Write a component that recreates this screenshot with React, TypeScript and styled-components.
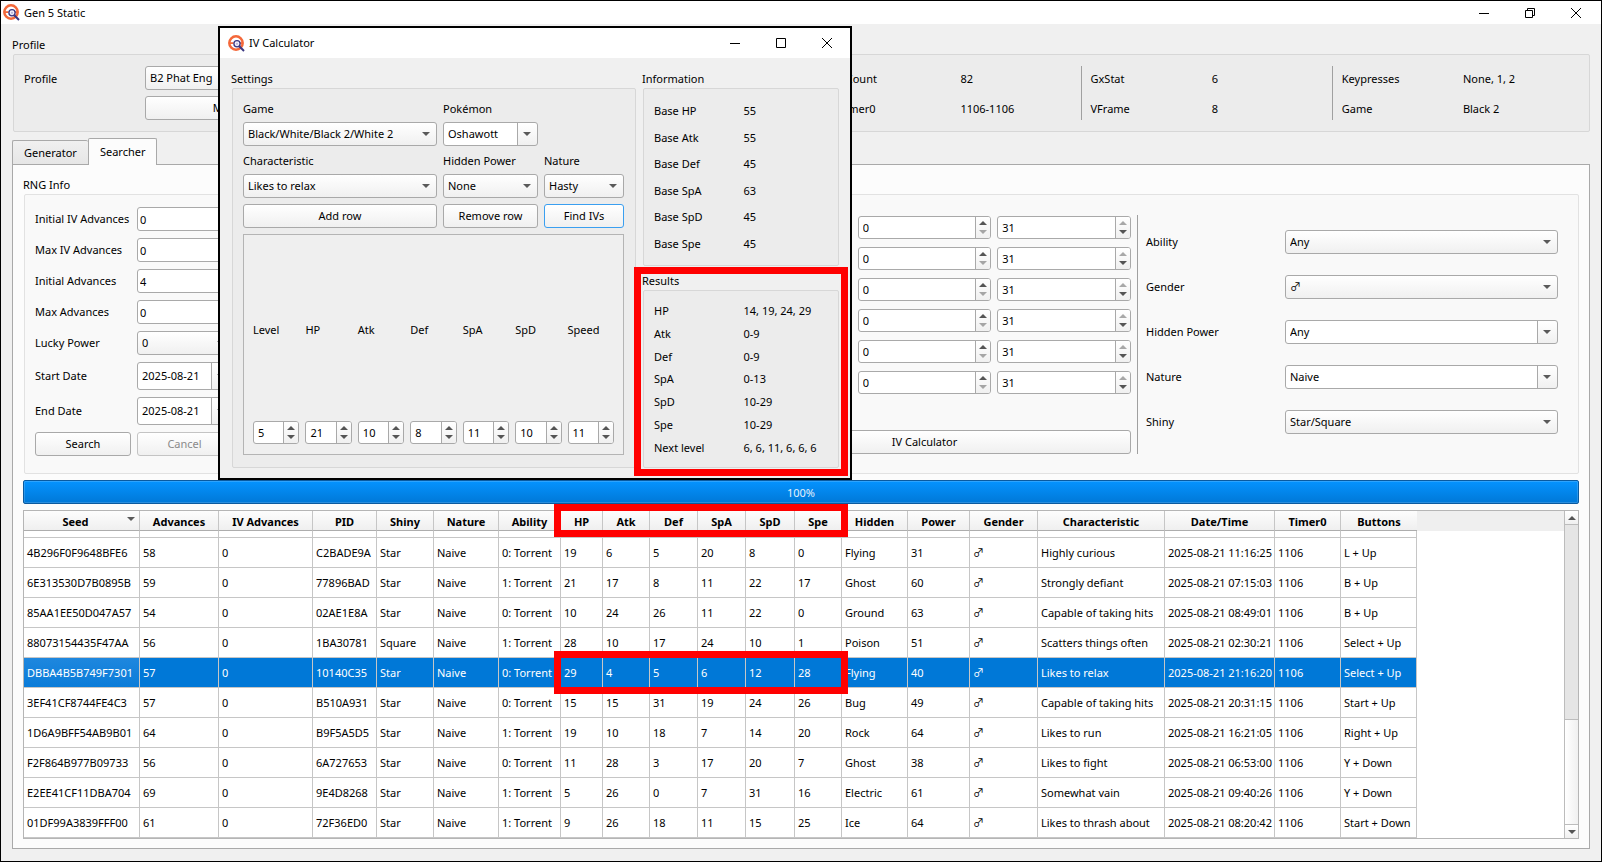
import React, { useId } from 'react';
import styled, { createGlobalStyle, css } from 'styled-components';

const Global = createGlobalStyle`
  *, *::before, *::after { box-sizing: border-box; }
  html, body { margin: 0; }
  body, input, select, button, table {
    font-family: "Noto Sans", "Noto Sans CJK SC", sans-serif;
    font-size: 11px;
    line-height: 16px;
    color: #000;
  }
`;

const face = 'linear-gradient(#ffffff, #f0f0f0)';
const line = '#a9a9a9';

/* ---------- window chrome ---------- */

const Desktop = styled.div`
  position: relative;
  display: flex;
  flex-direction: column;
  min-height: 100vh;
  border: 1px solid #000;
  background: #f0f0f0;
`;

const TitleBar = styled.header<{ $tall?: boolean }>`
  display: flex;
  align-items: center;
  height: ${p => (p.$tall ? 30 : 23)}px;
  padding-left: ${p => (p.$tall ? 8 : 2)}px;
  padding-right: ${p => (p.$tall ? 3 : 5)}px;
  background: #fff;
`;

const WindowTitle = styled.h1`
  flex: 1;
  margin: 0;
  padding-left: 4px;
  font-size: 11px;
  font-weight: 400;
  line-height: 16px;
`;

const ChromeButton = styled.button`
  display: flex;
  align-items: center;
  justify-content: center;
  width: 40px;
  height: 20px;
  padding: 0;
  border: 0;
  background: none;

  & + & { margin-left: 6px; }
`;

const AppIcon = () => (
  <svg width="17" height="17" viewBox="0 0 17 17" aria-hidden="true">
    <circle cx="8" cy="8" r="6.7" fill="#fff" stroke="#f4683a" strokeWidth="2.5" />
    <path d="M2 7.2h3.5v1.8H2zM12 7.2h2.5v1.8H12z" fill="#f4683a" />
    <circle cx="9" cy="8.8" r="3.1" fill="#f1effa" stroke="#3a3680" strokeWidth="1.3" />
    <circle cx="9" cy="8.8" r="1.1" fill="#b9b6dc" />
    <path d="M11.3 11.3 16 16" stroke="#3a3680" strokeWidth="2" />
  </svg>
);

const ChromeButtons = ({ restored }: { restored?: boolean }) => (
  <>
    <ChromeButton aria-label="Minimize">
      <svg width="10" height="10" stroke="#000" fill="none"><path d="M0 5.5h10" /></svg>
    </ChromeButton>
    <ChromeButton aria-label={restored ? 'Maximize' : 'Restore'}>
      <svg width="10" height="10" stroke="#000" fill="none">
        {restored ? <path d="M.5.5h9v9h-9z" /> : <path d="M.5 2.5h7v7h-7zM2.5 2.5v-2h7v7h-2" />}
      </svg>
    </ChromeButton>
    <ChromeButton aria-label="Close">
      <svg width="10" height="10" stroke="#000" fill="none"><path d="M0 0l10 10M10 0L0 10" /></svg>
    </ChromeButton>
  </>
);

/* ---------- group box ---------- */

const Group = styled.section<{ $grow?: boolean }>`
  display: flex;
  flex-direction: column;
  min-width: 0;
  ${p => p.$grow && css`flex: 1;`}
`;

const GroupTitle = styled.h2`
  margin: 0 0 1px;
  font-size: 11px;
  font-weight: 400;
  line-height: 16px;
`;

const GroupBody = styled.div<{ $light?: boolean; $deep?: boolean }>`
  flex: 1;
  margin-left: 1px;
  padding: ${p => (p.$deep ? '12px 20px 17px 10px' : '11px 11px 11px 10px')};
  border: 1px solid ${p => (p.$light ? '#e2e2e2' : '#d7d7d7')};
  border-radius: 2px;
  background: ${p => (p.$light ? '#f9f9f9' : '#ececec')};
`;

/* ---------- controls ---------- */

const Button = styled.button<{ $focused?: boolean; $push?: boolean }>`
  height: 24px;
  padding: 0 6px;
  border: 1px solid ${p => (p.$focused ? '#3a9ff0' : line)};
  border-radius: 3px;
  background: ${face};
  white-space: nowrap;
  ${p => p.$push && css`margin-top: auto;`}

  &:disabled { color: #8a8a8a; border-color: #c4c4c4; }
`;

const SelectShell = styled.div<{ $editable?: boolean; $tall?: boolean }>`
  position: relative;
  height: ${p => (p.$tall ? 28 : 24)}px;
  border: 1px solid ${line};
  border-radius: 3px;
  background: ${p => (p.$editable ? `linear-gradient(${line}, ${line}) right 19px top / 1px 100% no-repeat, ${face} right / 19px 100% no-repeat, #fff` : face)};

  &::after {
    content: '';
    position: absolute;
    right: 6px;
    top: calc(50% - 2px);
    border: 4px solid transparent;
    border-top-color: #5a5a5a;
    border-bottom: 0;
    pointer-events: none;
  }
`;

const SelectField = styled.select`
  display: block;
  width: 100%;
  height: 100%;
  padding: 0 20px 0 4px;
  border: 0;
  background: none;
  appearance: none;
  outline: 0;
`;

const Select = ({ value, id, label, editable, tall }: {
  value: string; id?: string; label?: string; editable?: boolean; tall?: boolean;
}) => (
  <SelectShell $editable={editable} $tall={tall}>
    <SelectField id={id} aria-label={label} defaultValue={value}>
      <option>{value}</option>
    </SelectField>
  </SelectShell>
);

const TextField = styled.input`
  width: 100%;
  min-width: 0;
  height: 24px;
  padding: 0 2px;
  border: 1px solid ${line};
  border-radius: 3px;
  background: #fff;
  outline: 0;
`;

const SpinShell = styled.div`
  display: flex;
  height: 23px;
  min-width: 0;
  border: 1px solid ${line};
  border-radius: 3px;
  background: #fff;
  overflow: hidden;
`;

const SpinInput = styled.input`
  flex: 1;
  width: 0;
  min-width: 0;
  padding: 0 4px;
  border: 0;
  background: none;
  outline: 0;
  appearance: textfield;

  &::-webkit-inner-spin-button { appearance: none; }
`;

const SpinButtons = styled.div`
  display: flex;
  flex-direction: column;
  width: 15px;
  padding: 2px 0;
  border-left: 1px solid ${line};
  background: ${face};
`;

const SpinButton = styled.button<{ $down?: boolean }>`
  display: flex;
  flex: 1;
  align-items: center;
  justify-content: center;
  padding: 0;
  border: 0;
  background: none;

  &::before {
    content: '';
    border: 4px solid transparent;
    ${p => (p.$down ? css`border-top-color: #555; border-bottom: 0;` : css`border-bottom-color: #555; border-top: 0;`)}
  }

  &:disabled { opacity: 0.5; }
`;

const Spin = ({ value, label, atMin, atMax }: {
  value: number; label: string; atMin?: boolean; atMax?: boolean;
}) => (
  <SpinShell>
    <SpinInput type="number" aria-label={label} defaultValue={value} />
    <SpinButtons>
      <SpinButton aria-label={`${label} up`} disabled={atMax} />
      <SpinButton $down aria-label={`${label} down`} disabled={atMin} />
    </SpinButtons>
  </SpinShell>
);

/* ---------- main window ---------- */

const Main = styled.main`
  display: flex;
  flex: 1;
  flex-direction: column;
  padding: 13px 11px 12px;
`;

const ProfileRow = styled.div`
  display: grid;
  grid-template-columns: minmax(0, 13fr) repeat(3, minmax(0, 4fr));
  column-gap: 5px;
`;

const ProfilePicker = styled.div`
  display: grid;
  grid-template-columns: 115px 182px;
  grid-auto-rows: 24px;
  gap: 6px;
  align-items: center;

  ${Button} { grid-column: 2; }
  label { padding-top: 2px; }
`;

const ProfileFacts = styled.dl`
  display: grid;
  grid-template-columns: 1fr 1fr;
  grid-auto-rows: 24px;
  gap: 6px;
  align-items: center;
  margin: 0;
  padding-left: 9px;
  border-left: 1px solid #a0a0a0;

  dt, dd { margin: 0; padding-top: 2px; }
`;

const Tabs = styled.div`
  display: flex;
  align-items: flex-end;
  margin-top: 6px;
`;

const Tab = styled.button<{ $active?: boolean }>`
  position: relative;
  height: ${p => (p.$active ? 27 : 24)}px;
  margin-bottom: ${p => (p.$active ? -1 : 0)}px;
  padding: 0 11px;
  border: 1px solid ${line};
  border-bottom: 0;
  border-radius: 2px 2px 0 0;
  background: ${p => (p.$active ? '#fcfcfc' : 'linear-gradient(#f0f0f0, #e6e6e6)')};
  ${p => !p.$active && css`border-right: 0;`}
`;

const Pane = styled.div`
  display: flex;
  flex: 1;
  flex-direction: column;
  gap: 6px;
  padding: 12px 10px 9px;
  border: 1px solid ${line};
  background: #fcfcfc;
`;

const SearchRow = styled.div`
  display: grid;
  grid-template-columns: minmax(0, 677fr) minmax(0, 413fr) minmax(0, 421fr);
  column-gap: 6px;
`;

const RngForm = styled.form`
  display: grid;
  grid-template-columns: 96px 95px;
  gap: 7px 6px;
  align-items: center;
  white-space: nowrap;
`;

const IvColumn = styled.div`
  display: flex;
  flex-direction: column;
  margin: 8px 0 2px;
  padding-top: 1px;
`;

const IvRanges = styled.div`
  display: grid;
  grid-template-columns: 1fr 1fr 1fr;
  gap: 8px 6px;
`;

const IvPair = styled.div`
  display: grid;
  grid-column: 2 / span 2;
  grid-template-columns: 1fr 1fr;
  gap: 6px;
`;

const FilterColumn = styled.div`
  display: flex;
  flex-direction: column;
  gap: 21px;
  margin: 8px 0 2px;
  padding: 15px 0 0 8px;
  border-left: 1px solid #a0a0a0;
`;

const FilterRow = styled.div`
  display: grid;
  grid-template-columns: minmax(0, 133fr) minmax(0, 273fr);
  gap: 6px;
  align-items: center;
`;

const ProgressBar = styled.div`
  display: flex;
  align-items: center;
  justify-content: center;
  height: 24px;
  padding-top: 2px;
  border: 1px solid #0a5a9f;
  border-radius: 2px;
  background: linear-gradient(#0593ff, #0078d7);
  box-shadow: inset 0 0 0 1px rgba(255, 255, 255, 0.16);
  color: #e6f1fb;
`;

/* ---------- results table ---------- */

const TableView = styled.div`
  display: flex;
  flex: 1;
  border: 1px solid #b5b5b5;
  background: #fff;
`;

const TableScroll = styled.div`
  flex: 1;
  min-width: 0;
  overflow: hidden;
  background: linear-gradient(#efefef, #efefef) top / 100% 20px no-repeat;
`;

const Table = styled.table`
  width: 1393px;
  table-layout: fixed;
  border-collapse: separate;
  border-spacing: 0;
  white-space: nowrap;
`;

const HeadCell = styled.th<{ $sorted?: boolean }>`
  position: relative;
  height: 20px;
  padding: 2px 0 0;
  border-right: 1px solid #c6c6c6;
  border-bottom: 1px solid #adadad;
  background: linear-gradient(#fdfdfd, #efefef);
  font-weight: 700;
  text-align: center;

  &:last-child { border-right: 0; }

  ${p => p.$sorted && css`
    padding-right: 12px;

    &::after {
      content: '';
      position: absolute;
      top: 6px;
      right: 4px;
      border: 4px solid transparent;
      border-top-color: #5a5a5a;
      border-bottom: 0;
    }
  `}
`;

const Row = styled.tr<{ $selected?: boolean }>`
  ${p => p.$selected && css`
    background: #0078d7;
    color: #fff;

    td:first-child { background: linear-gradient(#1e87de, #0a7cd9); }
  `}
`;

const Cell = styled.td<{ $clipped?: boolean }>`
  height: ${p => (p.$clipped ? 7 : 30)}px;
  padding: 0 0 0 3px;
  border-right: 1px solid #c6c6c6;
  border-bottom: 1px solid #c6c6c6;
`;

const ScrollBar = styled.div`
  display: flex;
  flex-direction: column;
  width: 14px;
  border-left: 1px solid #bcbcbc;
  background: #e5e5e5;
`;

const ScrollButton = styled.button<{ $down?: boolean }>`
  display: flex;
  align-items: center;
  justify-content: center;
  height: 14px;
  padding: 0;
  border: 0 solid #bcbcbc;
  border-width: ${p => (p.$down ? '1px 0 0' : '0 0 1px')};
  background: ${face};

  &::before {
    content: '';
    border: 4px solid transparent;
    ${p => (p.$down ? css`border-top-color: #555; border-bottom: 0;` : css`border-bottom-color: #555; border-top: 0;`)}
  }
`;

const ScrollThumb = styled.div`
  flex: 0 0 32%;
  margin-top: auto;
  border-top: 1px solid #bcbcbc;
  background: linear-gradient(90deg, #ffffff, #f0f0f0);
`;

const columns: [string, number][] = [
  ['Seed', 116], ['Advances', 79], ['IV Advances', 94], ['PID', 64], ['Shiny', 57],
  ['Nature', 65], ['Ability', 62], ['HP', 42], ['Atk', 47], ['Def', 48], ['SpA', 48],
  ['SpD', 49], ['Spe', 47], ['Hidden', 66], ['Power', 62], ['Gender', 68],
  ['Characteristic', 127], ['Date/Time', 110], ['Timer0', 66], ['Buttons', 76],
];

const rows = [
  '4B296F0F9648BFE6|58|0|C2BADE9A|Star|Naive|0: Torrent|19|6|5|20|8|0|Flying|31|♂|Highly curious|2025-08-21 11:16:25|1106|L + Up',
  '6E313530D7B0895B|59|0|77896BAD|Star|Naive|1: Torrent|21|17|8|11|22|17|Ghost|60|♂|Strongly defiant|2025-08-21 07:15:03|1106|B + Up',
  '85AA1EE50D047A57|54|0|02AE1E8A|Star|Naive|0: Torrent|10|24|26|11|22|0|Ground|63|♂|Capable of taking hits|2025-08-21 08:49:01|1106|B + Up',
  '88073154435F47AA|56|0|1BA30781|Square|Naive|1: Torrent|28|10|17|24|10|1|Poison|51|♂|Scatters things often|2025-08-21 02:30:21|1106|Select + Up',
  'DBBA4B5B749F7301|57|0|10140C35|Star|Naive|0: Torrent|29|4|5|6|12|28|Flying|40|♂|Likes to relax|2025-08-21 21:16:20|1106|Select + Up',
  '3EF41CF8744FE4C3|57|0|B510A931|Star|Naive|0: Torrent|15|15|31|19|24|26|Bug|49|♂|Capable of taking hits|2025-08-21 20:31:15|1106|Start + Up',
  '1D6A9BFF54AB9B01|64|0|B9F5A5D5|Star|Naive|1: Torrent|19|10|18|7|14|20|Rock|64|♂|Likes to run|2025-08-21 16:21:05|1106|Right + Up',
  'F2F864B977B09733|56|0|6A727653|Star|Naive|0: Torrent|11|28|3|17|20|7|Ghost|38|♂|Likes to fight|2025-08-21 06:53:00|1106|Y + Down',
  'E2EE41CF11DBA704|69|0|9E4D8268|Star|Naive|1: Torrent|5|26|0|7|31|16|Electric|61|♂|Somewhat vain|2025-08-21 09:40:26|1106|Y + Down',
  '01DF99A3839FFF00|61|0|72F36ED0|Star|Naive|1: Torrent|9|26|18|11|15|25|Ice|64|♂|Likes to thrash about|2025-08-21 08:20:42|1106|Start + Down',
].map(r => r.split('|'));

const SELECTED = 4;

/* ---------- IV calculator dialog ---------- */

const Dialog = styled.div`
  position: absolute;
  top: 25px;
  left: 217px;
  width: 634px;
  border: 2px solid #000;
  background: #f0f0f0;
`;

const DialogBody = styled.div`
  display: grid;
  grid-template-columns: 405px minmax(0, 1fr);
  gap: 6px;
  padding: 13px 11px 10px;
`;

const SettingsGrid = styled.div`
  display: grid;
  grid-template-columns: 194px 95px minmax(0, 1fr);
  gap: 6px;
`;

const FieldLabel = styled.label<{ $last?: boolean }>`
  height: 16px;
  padding-top: 1px;
  ${p => p.$last && css`grid-column: 2 / span 2;`}
`;

const StatFrame = styled.div`
  display: grid;
  grid-column: 1 / -1;
  grid-template-columns: repeat(7, minmax(0, 1fr));
  grid-template-rows: 1fr 23px;
  gap: 6px;
  align-items: center;
  height: 221px;
  padding: 9px 9px 10px;
  border: 1px solid #b4b4b4;
  background: #efefef;
`;

const SideColumn = styled.div`
  display: flex;
  flex-direction: column;
  gap: 7px;
`;

const StatList = styled.dl`
  display: grid;
  grid-template-columns: 1fr 1fr;
  grid-auto-rows: 1fr;
  gap: 6px;
  align-items: center;
  height: 154px;
  margin: 0;
  padding-top: 1px;
  white-space: nowrap;

  dd { margin: 0; }
`;

/* ---------- red annotation frames ---------- */

const Mark = styled.div<{ $top: number; $left: number; $width: number; $height: number }>`
  position: absolute;
  top: ${p => p.$top}px;
  left: ${p => p.$left}px;
  width: ${p => p.$width}px;
  height: ${p => p.$height}px;
  border: 7px solid #f00;
  pointer-events: none;
`;

const Facts = ({ items }: { items: [string, string][] }) => (
  <>
    {items.map(([k, v]) => (
      <React.Fragment key={k}>
        <dt>{k}</dt>
        <dd>{v}</dd>
      </React.Fragment>
    ))}
  </>
);

const Filter = ({ label, value, editable }: { label: string; value: string; editable?: boolean }) => {
  const id = useId();
  return (
    <FilterRow>
      <label htmlFor={id}>{label}</label>
      <Select id={id} value={value} editable={editable} />
    </FilterRow>
  );
};

const stats: [string, number][] = [
  ['Level', 5], ['HP', 21], ['Atk', 10], ['Def', 8], ['SpA', 11], ['SpD', 10], ['Speed', 11],
];

const IvCalculator = () => (
  <Dialog role="dialog" aria-label="IV Calculator">
    <TitleBar $tall>
      <AppIcon />
      <WindowTitle>IV Calculator</WindowTitle>
      <ChromeButtons restored />
    </TitleBar>
    <DialogBody>
      <Group>
        <GroupTitle>Settings</GroupTitle>
        <GroupBody>
          <SettingsGrid>
            <FieldLabel htmlFor="game">Game</FieldLabel>
            <FieldLabel htmlFor="pokemon" $last>Pokémon</FieldLabel>
            <Select id="game" value="Black/White/Black 2/White 2" />
            <Select id="pokemon" value="Oshawott" editable />
            <span />
            <FieldLabel htmlFor="characteristic">Characteristic</FieldLabel>
            <FieldLabel htmlFor="hidden-power">Hidden Power</FieldLabel>
            <FieldLabel htmlFor="nature">Nature</FieldLabel>
            <Select id="characteristic" value="Likes to relax" />
            <Select id="hidden-power" value="None" />
            <Select id="nature" value="Hasty" />
            <Button>Add row</Button>
            <Button>Remove row</Button>
            <Button $focused>Find IVs</Button>
            <StatFrame>
              {stats.map(([name]) => <span key={name}>{name}</span>)}
              {stats.map(([name, value]) => <Spin key={name} value={value} label={name} />)}
            </StatFrame>
          </SettingsGrid>
        </GroupBody>
      </Group>
      <SideColumn>
        <Group $grow>
          <GroupTitle>Information</GroupTitle>
          <GroupBody>
            <StatList>
              <Facts items={[['Base HP', '55'], ['Base Atk', '55'], ['Base Def', '45'], ['Base SpA', '63'], ['Base SpD', '45'], ['Base Spe', '45']]} />
            </StatList>
          </GroupBody>
        </Group>
        <Group $grow>
          <GroupTitle>Results</GroupTitle>
          <GroupBody>
            <StatList>
              <Facts items={[['HP', '14, 19, 24, 29'], ['Atk', '0-9'], ['Def', '0-9'], ['SpA', '0-13'], ['SpD', '10-29'], ['Spe', '10-29'], ['Next level', '6, 6, 11, 6, 6, 6']]} />
            </StatList>
          </GroupBody>
        </Group>
      </SideColumn>
    </DialogBody>
  </Dialog>
);

export default function App() {
  return (
    <Desktop>
      <Global />
      <TitleBar>
        <AppIcon />
        <WindowTitle>Gen 5 Static</WindowTitle>
        <ChromeButtons />
      </TitleBar>
      <Main>
        <Group>
          <GroupTitle>Profile</GroupTitle>
          <GroupBody>
            <ProfileRow>
              <ProfilePicker>
                <label htmlFor="profile">Profile</label>
                <Select id="profile" value="B2 Phat Eng" />
                <Button>Manager</Button>
              </ProfilePicker>
              <ProfileFacts><Facts items={[['VCount', '82'], ['Timer0', '1106-1106']]} /></ProfileFacts>
              <ProfileFacts><Facts items={[['GxStat', '6'], ['VFrame', '8']]} /></ProfileFacts>
              <ProfileFacts><Facts items={[['Keypresses', 'None, 1, 2'], ['Game', 'Black 2']]} /></ProfileFacts>
            </ProfileRow>
          </GroupBody>
        </Group>

        <Tabs role="tablist">
          <Tab role="tab">Generator</Tab>
          <Tab role="tab" aria-selected $active>Searcher</Tab>
        </Tabs>

        <Pane>
          <Group>
            <GroupTitle>RNG Info</GroupTitle>
            <GroupBody $light $deep>
              <SearchRow>
                <RngForm>
                  <label htmlFor="iv-init">Initial IV Advances</label>
                  <TextField id="iv-init" defaultValue="0" />
                  <label htmlFor="iv-max">Max IV Advances</label>
                  <TextField id="iv-max" defaultValue="0" />
                  <label htmlFor="adv-init">Initial Advances</label>
                  <TextField id="adv-init" defaultValue="4" />
                  <label htmlFor="adv-max">Max Advances</label>
                  <TextField id="adv-max" defaultValue="0" />
                  <label htmlFor="lucky">Lucky Power</label>
                  <Select id="lucky" value="0" />
                  <label htmlFor="start">Start Date</label>
                  <Select id="start" value="2025-08-21" editable tall />
                  <label htmlFor="end">End Date</label>
                  <Select id="end" value="2025-08-21" editable tall />
                  <Button type="button">Search</Button>
                  <Button type="button" disabled>Cancel</Button>
                </RngForm>
                <IvColumn>
                  <IvRanges>
                    {['HP', 'Atk', 'Def', 'SpA', 'SpD', 'Spe'].map(s => (
                      <IvPair key={s}>
                        <Spin value={0} label={`${s} minimum`} atMin />
                        <Spin value={31} label={`${s} maximum`} atMax />
                      </IvPair>
                    ))}
                  </IvRanges>
                  <Button $push>IV Calculator</Button>
                </IvColumn>
                <FilterColumn>
                  <Filter label="Ability" value="Any" />
                  <Filter label="Gender" value="♂" />
                  <Filter label="Hidden Power" value="Any" editable />
                  <Filter label="Nature" value="Naive" editable />
                  <Filter label="Shiny" value="Star/Square" />
                </FilterColumn>
              </SearchRow>
            </GroupBody>
          </Group>

          <ProgressBar role="progressbar" aria-valuenow={100}>100%</ProgressBar>

          <TableView>
            <TableScroll>
              <Table>
                <colgroup>
                  {columns.map(([name, width]) => <col key={name} width={width} />)}
                </colgroup>
                <thead>
                  <tr>{columns.map(([name], i) => <HeadCell key={name} $sorted={i === 0}>{name}</HeadCell>)}</tr>
                </thead>
                <tbody>
                  <Row>{columns.map(([name]) => <Cell key={name} $clipped />)}</Row>
                  {rows.map((cells, r) => (
                    <Row key={cells[0]} $selected={r === SELECTED}>
                      {cells.map((text, i) => <Cell key={i}>{text}</Cell>)}
                    </Row>
                  ))}
                </tbody>
              </Table>
            </TableScroll>
            <ScrollBar>
              <ScrollButton aria-label="Scroll up" />
              <ScrollThumb />
              <ScrollButton $down aria-label="Scroll down" />
            </ScrollBar>
          </TableView>
        </Pane>
      </Main>

      <IvCalculator />

      <Mark $top={266} $left={633} $width={214} $height={209} />
      <Mark $top={503} $left={553} $width={294} $height={33} />
      <Mark $top={650} $left={553} $width={294} $height={43} />
    </Desktop>
  );
}
